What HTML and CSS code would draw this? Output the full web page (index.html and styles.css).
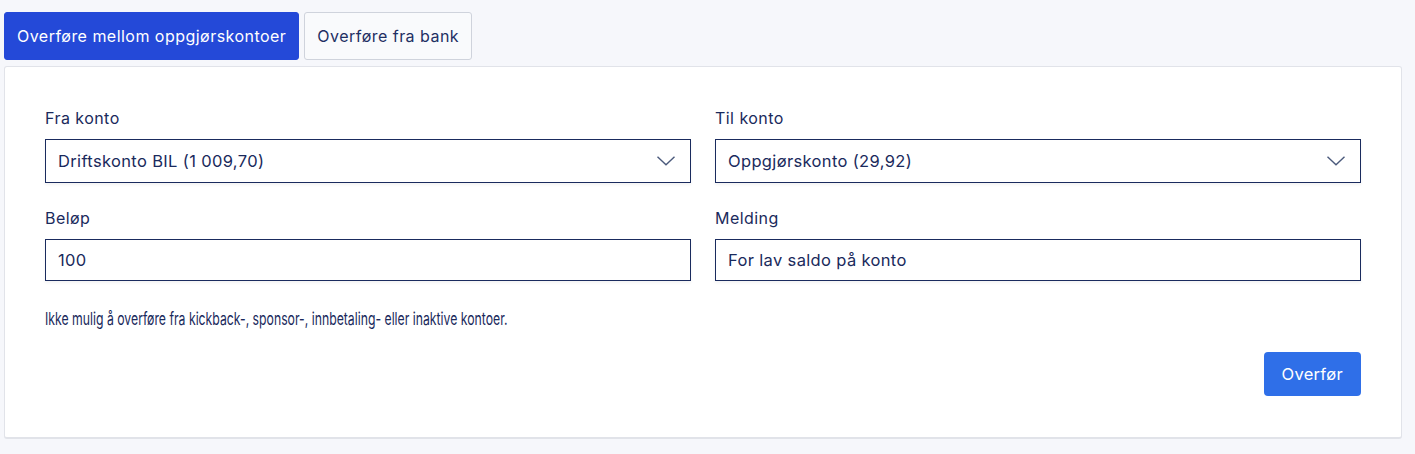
FILE: index.html
```html
<!DOCTYPE html>
<html lang="no">
<head>
    <meta charset="UTF-8">
    <meta name="viewport" content="width=device-width, initial-scale=1.0">
    <title>Overføring</title>
    <link rel="stylesheet" href="styles.css">
</head>
<body>
    <!-- Tabs -->
    <div class="transfer-tabs">
        <button type="button" class="tab active">Overføre mellom oppgjørskontoer</button>
        <button type="button" class="tab">Overføre fra bank</button>
    </div>
    <!-- Transfer Form -->
    <form class="transfer-card" onsubmit="event.preventDefault()">
        <div class="form-grid">
            <div class="field">
                <label for="from-account">Fra konto</label>
                <div class="select-wrap">
                    <select id="from-account">
                        <option selected>Driftskonto BIL (1 009,70)</option>
                    </select>
                    <svg class="chevron" width="18" height="10" viewBox="0 0 18 10"><path d="M0.5 0.8 L9 8.8 L17.5 0.8" fill="none" stroke="#4b5a7c" stroke-width="1.4"/></svg>
                </div>
            </div>
            <div class="field">
                <label for="to-account">Til konto</label>
                <div class="select-wrap">
                    <select id="to-account">
                        <option selected>Oppgjørskonto (29,92)</option>
                    </select>
                    <svg class="chevron" width="18" height="10" viewBox="0 0 18 10"><path d="M0.5 0.8 L9 8.8 L17.5 0.8" fill="none" stroke="#4b5a7c" stroke-width="1.4"/></svg>
                </div>
            </div>
            <div class="field">
                <label for="amount">Beløp</label>
                <input type="text" id="amount" value="100">
            </div>
            <div class="field">
                <label for="message">Melding</label>
                <input type="text" id="message" value="For lav saldo på konto">
            </div>
        </div>
        <p class="transfer-note"><span>Ikke mulig å overføre fra kickback-, sponsor-, innbetaling- eller inaktive kontoer.</span></p>
        <div class="form-actions">
            <button type="submit" class="submit-btn">Overfør</button>
        </div>
    </form>
</body>
</html>
```

FILE: styles.css
```css
/* Global Styling */
body {
    margin: 0;
    padding: 12px 13px 0 4px;
    background-color: #f6f7fb;
    font-family: Inter, "Noto Sans", sans-serif;
    color: #1a2a5c;
}
/* Tabs */
.transfer-tabs {
    display: flex;
    gap: 5px;
    margin-bottom: 6px;
}
.tab {
    height: 48px;
    padding: 0 12px;
    border: 1px solid #cfd3dc;
    border-radius: 3px;
    background-color: #f9fafc;
    color: #1f2f63;
    font-family: inherit;
    font-size: 16px;
    letter-spacing: 0.47px;
    cursor: pointer;
}
.tab.active {
    background-color: #2449d8;
    border-color: #2449d8;
    color: #ffffff;
}
/* Card */
.transfer-card {
    background-color: #ffffff;
    border: 1px solid #e1e3e9;
    border-bottom-width: 2px;
    border-radius: 3px;
    padding: 40px 40px 41px;
}
.form-grid {
    display: grid;
    grid-template-columns: 1fr 1fr;
    column-gap: 24px;
    row-gap: 24px;
}
.field label {
    display: block;
    font-size: 16px;
    line-height: 22px;
    margin-bottom: 10px;
    letter-spacing: 0.45px;
}
.select-wrap {
    position: relative;
}
.field select,
.field input[type="text"] {
    display: block;
    width: 100%;
    box-sizing: border-box;
    margin: 0;
    padding: 0 12px;
    border: 1px solid #1a2b5e;
    border-radius: 0;
    background-color: #ffffff;
    color: #1a2a5c;
    font-family: inherit;
    font-size: 16.5px;
    letter-spacing: 0.35px;
    outline: none;
    box-shadow: 0 2px 3px rgba(0, 0, 0, 0.05);
}
.field select {
    height: 44px;
    appearance: none;
    -webkit-appearance: none;
}
.field input[type="text"] {
    height: 42px;
}
.chevron {
    position: absolute;
    right: 16px;
    top: 17px;
    pointer-events: none;
}
/* Note (the original text is drawn narrow) */
.transfer-note {
    margin: 28px 0 0;
    font-size: 17.5px;
    line-height: 20px;
}
.transfer-note span {
    display: inline-block;
    white-space: nowrap;
    transform: scaleX(0.7);
    transform-origin: 0 50%;
}
/* Buttons */
.form-actions {
    display: flex;
    justify-content: flex-end;
    margin-top: 23px;
}
.submit-btn {
    height: 44px;
    padding: 0 18px;
    border: none;
    border-radius: 4px;
    background-color: #2f6fe8;
    color: #ffffff;
    font-family: inherit;
    font-size: 16.5px;
    letter-spacing: 0.3px;
    cursor: pointer;
}
```
